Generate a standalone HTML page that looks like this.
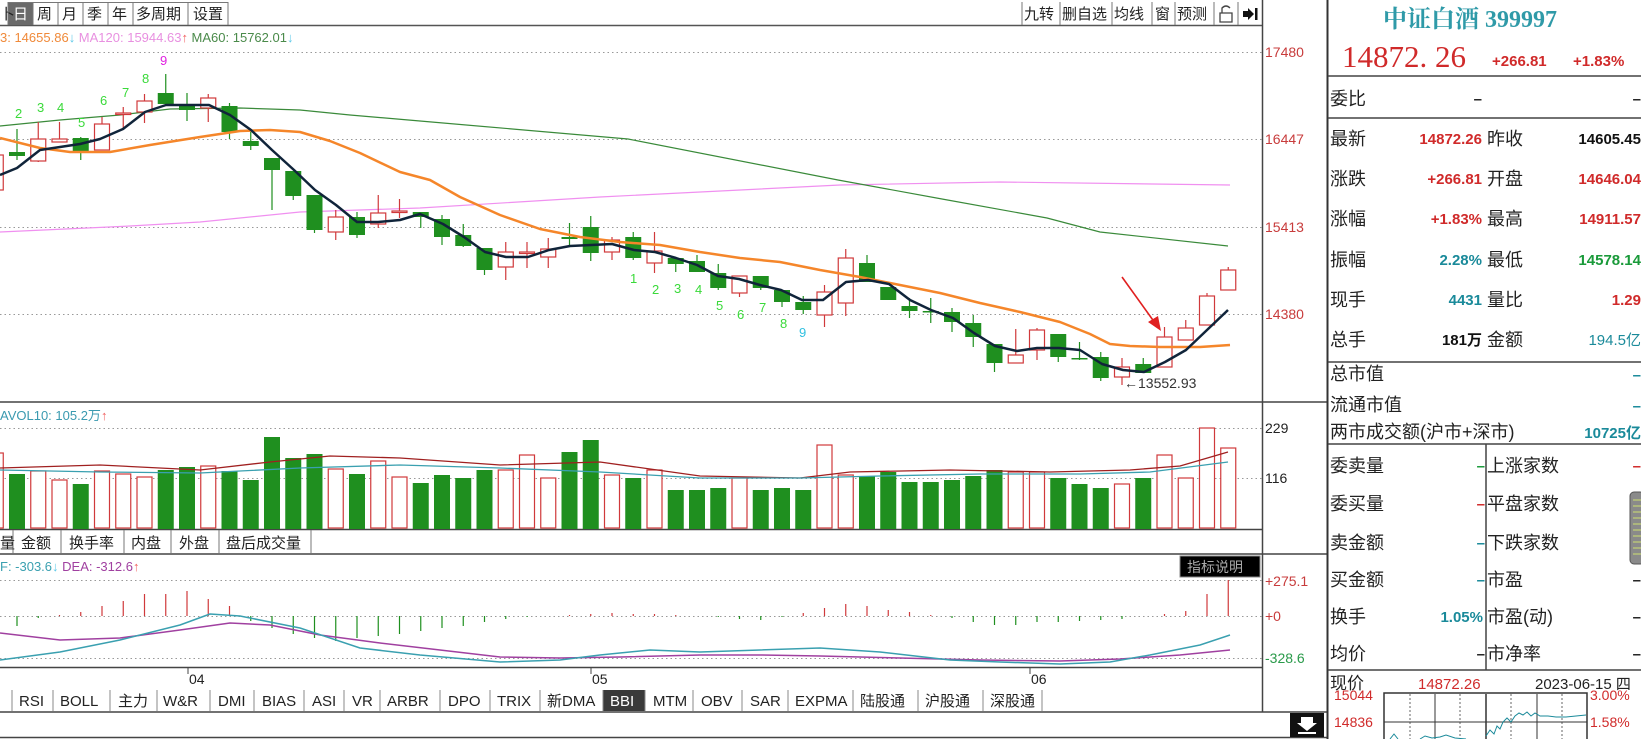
<!DOCTYPE html>
<html><head><meta charset="utf-8">
<style>
html,body{margin:0;padding:0;background:#fff;width:1641px;height:739px;overflow:hidden}
svg{display:block}
text{font-family:"Liberation Sans","Noto Sans CJK SC",sans-serif}
.cj{font-family:"Noto Sans CJK SC","WenQuanYi Zen Hei",sans-serif}
</style></head>
<body>
<svg id="s" width="1641" height="739" xmlns="http://www.w3.org/2000/svg">
<rect width="1641" height="739" fill="#fff"/>
<g font-size="15" class="cj">
<line x1="0" y1="25.5" x2="1262" y2="25.5" stroke="#555" stroke-width="1.5"/>
<rect x="8" y="2" width="25" height="23" fill="#6a6a6a"/>
<text x="0" y="19" class="cj" fill="#222">卜</text>
<text x="13" y="19" class="cj" fill="#fff">日</text>
<g fill="#222" class="cj">
<text x="37" y="19">周</text><text x="62" y="19">月</text><text x="87" y="19">季</text><text x="112" y="19">年</text>
<text x="136" y="19">多周期</text><text x="193" y="19">设置</text>
<text x="1024" y="19">九转</text><text x="1062" y="19">删自选</text><text x="1114" y="19">均线</text><text x="1155" y="19">窗</text><text x="1177" y="19">预测</text>
</g>
<g stroke="#777" fill="none">
<path d="M8 2V25M33 2V25M58 2V25M83 2V25M108 2V25M133 2V25M188 2V25M228 2V25M8 2.5H228"/>
<path d="M1022 2V25M1060 2V25M1112 2V25M1152 2V25M1175 2V25M1214 2V25M1238 2V25"/>
</g>
<path d="M1220 22V13H1232V22ZM1222 13V8Q1226 4 1230 8" stroke="#444" fill="none" stroke-width="1.3"/>
<path d="M1243 11H1248V8L1254 14L1248 20V17H1243Z" fill="#111"/><rect x="1255" y="8" width="2.5" height="12" fill="#111"/>
</g>
<text x="0" y="42" font-size="13"><tspan fill="#f08a3a">3: 14655.86</tspan><tspan fill="#5cc8e8">↓</tspan><tspan fill="#e890e0"> MA120: 15944.63</tspan><tspan fill="#f06060">↑</tspan><tspan fill="#4a8a4a"> MA60: 15762.01</tspan><tspan fill="#5cc8e8">↓</tspan></text>
<g id="grid" stroke="#999" stroke-dasharray="1.5,3" stroke-width="1">
<line x1="0" y1="52.5" x2="1262" y2="52.5"/><line x1="0" y1="139.5" x2="1262" y2="139.5"/>
<line x1="0" y1="227.5" x2="1262" y2="227.5"/><line x1="0" y1="314.5" x2="1262" y2="314.5"/>
<line x1="0" y1="428.5" x2="1262" y2="428.5"/><line x1="0" y1="478.5" x2="1262" y2="478.5"/>
<line x1="0" y1="580.5" x2="1262" y2="580.5"/><line x1="0" y1="616.5" x2="1262" y2="616.5"/><line x1="0" y1="658.5" x2="1262" y2="658.5"/>
</g>
<g font-size="14" fill="#c83c3c">
<text x="1265" y="57">17480</text><text x="1265" y="144">16447</text><text x="1265" y="232">15413</text><text x="1265" y="319">14380</text>
</g>
<text x="1265" y="433" font-size="14" fill="#222">229</text><text x="1265" y="483" font-size="14" fill="#222">116</text>
<text x="1265" y="586" font-size="14" fill="#c83c3c">+275.1</text><text x="1265" y="621" font-size="14" fill="#c83c3c">+0</text><text x="1265" y="663" font-size="14" fill="#2a9a4a">-328.6</text>
<g stroke="#444" stroke-width="1.5">
<line x1="1262.5" y1="0" x2="1262.5" y2="712"/>
<line x1="0" y1="402" x2="1327" y2="402"/>
<line x1="0" y1="529.5" x2="1262" y2="529.5"/>
<line x1="0" y1="554" x2="1327" y2="554"/>
<line x1="0" y1="667.5" x2="1262" y2="667.5"/>
<line x1="0" y1="712" x2="1327" y2="712"/>
<line x1="0" y1="737.5" x2="1327" y2="737.5"/>
</g>
<line x1="1327.5" y1="0" x2="1327.5" y2="739" stroke="#333" stroke-width="2"/>
<g id="chart"></g>
<text x="0" y="420" font-size="13"><tspan fill="#3a9ab0">AVOL10: 105.2万</tspan><tspan fill="#f06060">↑</tspan></text>
<g font-size="15" fill="#222" class="cj">
<path d="M13 530V553M61 530V553M124 530V553M171 530V553M219 530V553M311 530V553" stroke="#777"/>
<text x="0" y="548">量</text><text x="21" y="548">金额</text><text x="69" y="548">换手率</text><text x="131" y="548">内盘</text><text x="179" y="548">外盘</text><text x="226" y="548">盘后成交量</text>
</g>
<text x="0" y="571" font-size="13"><tspan fill="#3aa0b0">F: -303.6</tspan><tspan fill="#5cc8e8">↓</tspan><tspan fill="#a040a0"> DEA: -312.6</tspan><tspan fill="#f06060">↑</tspan></text>
<rect x="1180" y="556" width="80" height="21" fill="#000" stroke="#888"/>
<text x="1187" y="572" font-size="14" fill="#aaa" class="cj">指标说明</text>
<g font-size="14" fill="#222"><text x="189" y="684">04</text><text x="592" y="684">05</text><text x="1031" y="684">06</text></g>
<path d="M188 668V674M591 668V674M1030 668V674" stroke="#444"/>
<g font-size="15" fill="#222">
<rect x="603" y="690" width="42" height="21" fill="#3a3a3a"/>
<path d="M12 690V711M53 690V711M110 690V711M157 690V711M210 690V711M254 690V711M304 690V711M344 690V711M380 690V711M440 690V711M490 690V711M540 690V711M603 690V711M645 690V711M693 690V711M742 690V711M788 690V711M853 690V711M918 690V711M983 690V711M1042 690V711" stroke="#888"/>
<text x="19" y="706">RSI</text><text x="60" y="706">BOLL</text><text x="118" y="706" class="cj">主力</text><text x="163" y="706">W&amp;R</text><text x="218" y="706">DMI</text><text x="262" y="706">BIAS</text><text x="312" y="706">ASI</text><text x="352" y="706">VR</text><text x="387" y="706">ARBR</text><text x="448" y="706">DPO</text><text x="497" y="706">TRIX</text><text x="547" y="706"><tspan class="cj">新</tspan>DMA</text><text x="610" y="706" fill="#fff">BBI</text><text x="653" y="706">MTM</text><text x="701" y="706">OBV</text><text x="750" y="706">SAR</text><text x="795" y="706">EXPMA</text><text x="860" y="706" class="cj">陆股通</text><text x="925" y="706" class="cj">沪股通</text><text x="990" y="706" class="cj">深股通</text>
</g>
<rect x="1290" y="713" width="34" height="24" fill="#111"/>
<path d="M1301 717H1313V723H1317L1307 731L1297 723H1301Z" fill="#fff"/><rect x="1298" y="732" width="18" height="2" fill="#fff"/>

<text x="1383" y="27" font-size="24" font-weight="bold" fill="#2f9aa8" style="font-family:'Liberation Serif','Noto Serif CJK SC',serif">中证白酒 399997</text>
<text x="1342" y="67" font-size="31" fill="#d02a2a" style="font-family:'Liberation Serif',serif">14872. 26</text>
<text x="1492" y="66" font-size="15" font-weight="bold" fill="#d02a2a">+266.81</text>
<text x="1573" y="66" font-size="15" font-weight="bold" fill="#d02a2a">+1.83%</text>
<g stroke="#444" stroke-width="1.5"><line x1="1328" y1="76" x2="1641" y2="76"/><line x1="1328" y1="118" x2="1641" y2="118"/><line x1="1328" y1="362" x2="1641" y2="362"/><line x1="1328" y1="444" x2="1641" y2="444"/><line x1="1328" y1="670" x2="1641" y2="670"/><line x1="1486" y1="444" x2="1486" y2="670"/></g>
<g font-size="18" fill="#222" class="cj">
<text x="1330" y="105">委比</text>
<text x="1330" y="145">最新</text><text x="1487" y="145">昨收</text>
<text x="1330" y="185">涨跌</text><text x="1487" y="185">开盘</text>
<text x="1330" y="225">涨幅</text><text x="1487" y="225">最高</text>
<text x="1330" y="266">振幅</text><text x="1487" y="266">最低</text>
<text x="1330" y="306">现手</text><text x="1487" y="306">量比</text>
<text x="1330" y="346">总手</text><text x="1487" y="346">金额</text>
<text x="1330" y="380">总市值</text><text x="1330" y="411">流通市值</text><text x="1330" y="438">两市成交额(沪市+深市)</text>
<text x="1330" y="472">委卖量</text><text x="1487" y="472">上涨家数</text>
<text x="1330" y="510">委买量</text><text x="1487" y="510">平盘家数</text>
<text x="1330" y="549">卖金额</text><text x="1487" y="549">下跌家数</text>
<text x="1330" y="586">买金额</text><text x="1487" y="586">市盈</text>
<text x="1330" y="623">换手</text><text x="1487" y="623">市盈(动)</text>
<text x="1330" y="660">均价</text><text x="1487" y="660">市净率</text>
</g>
<g font-size="15" font-weight="bold" text-anchor="end">
<text x="1482" y="104" fill="#222">–</text><text x="1641" y="104" fill="#222">–</text>
<text x="1482" y="144" fill="#d02a2a">14872.26</text><text x="1641" y="144" fill="#111">14605.45</text>
<text x="1482" y="184" fill="#d02a2a">+266.81</text><text x="1641" y="184" fill="#d02a2a">14646.04</text>
<text x="1482" y="224" fill="#d02a2a">+1.83%</text><text x="1641" y="224" fill="#d02a2a">14911.57</text>
<text x="1482" y="265" fill="#1a8a9a">2.28%</text><text x="1641" y="265" fill="#1a9a3a">14578.14</text>
<text x="1482" y="305" fill="#1a8a9a">4431</text><text x="1641" y="305" fill="#d02a2a">1.29</text>
<text x="1482" y="345" fill="#111">181万</text><text x="1641" y="345" fill="#1a8a9a" font-weight="normal">194.5亿</text>
<text x="1641" y="380" fill="#1a8a9a">–</text><text x="1641" y="411" fill="#1a8a9a">–</text>
<text x="1641" y="438" fill="#1a8a9a">10725亿</text>
<text x="1485" y="471" fill="#1a9a3a">–</text><text x="1641" y="471" fill="#d02a2a">–</text>
<text x="1485" y="509" fill="#d02a2a">–</text>
<text x="1485" y="548" fill="#1a8a9a">–</text>
<text x="1485" y="585" fill="#1a8a9a">–</text><text x="1641" y="585" fill="#222">–</text>
<text x="1483" y="622" fill="#1a8a9a">1.05%</text><text x="1641" y="622" fill="#222">–</text>
<text x="1485" y="659" fill="#222">–</text><text x="1641" y="659" fill="#222">–</text>
</g>
<rect x="1630" y="492" width="14" height="72" rx="4" fill="#8a8a8a" stroke="#555"/>
<path d="M1633 500H1641M1633 506H1641M1633 512H1641M1633 518H1641M1633 524H1641M1633 530H1641M1633 536H1641M1633 542H1641M1633 548H1641M1633 554H1641" stroke="#cde070" stroke-width="1"/>
<text x="1330" y="689" font-size="17" fill="#222" class="cj">现价</text>
<text x="1418" y="689" font-size="15" fill="#d02a2a">14872.26</text>
<text x="1535" y="689" font-size="15" fill="#222">2023-06-15 <tspan class="cj">四</tspan></text>
<rect x="1384" y="693" width="203" height="50" fill="#fff" stroke="#333" stroke-width="1.5"/>
<path d="M1435 694V739M1537 694V739" stroke="#333"/><path d="M1486 694V739" stroke="#333" stroke-width="1.5"/>
<path d="M1410 694V739M1460 694V739M1511 694V739M1562 694V739" stroke="#666" stroke-dasharray="2,2"/>
<line x1="1384" y1="722" x2="1587" y2="722" stroke="#333"/>
<text x="1334" y="700" font-size="14" fill="#d02a2a">15044</text><text x="1334" y="727" font-size="14" fill="#d02a2a">14836</text>
<text x="1590" y="700" font-size="14" fill="#d02a2a">3.00%</text><text x="1590" y="727" font-size="14" fill="#d02a2a">1.58%</text>
<path d="M1390 739L1394 734L1398 739M1420 739L1425 736L1432 738L1440 737L1446 735L1455 738L1466 739M1486 736L1490 730L1494 734L1497 726L1500 729L1503 722L1507 718L1511 722L1515 716L1519 713L1523 715L1527 712L1531 716L1535 713L1540 716L1548 716L1556 717L1566 717L1576 716L1586 715" stroke="#1a8a9a" fill="none"/>
</svg>
<script>
var C=[
['r',155,190,150,190],['g',152,156,129,160],['r',139,161,122,162],['r',139,142,122,142],['g',138,151,137,160],['r',124,150,117,150],['r',113,114,107,130],['r',101,112,94,123],['g',93,104,74,104],['g',106,110,93,121],['r',98,108,94,122],['g',106,132,103,139],['g',141,146,132,150],['g',158,170,158,210],['g',171,196,171,200],['g',195,230,195,233],['r',217,232,210,240],['g',217,235,212,238],['r',213,224,195,228],['r',211,212,199,218],
['g',212,217,212,228],['g',219,237,215,245],['g',235,246,224,247],['g',248,270,248,275],['r',252,267,242,280],['r',252,253,242,268],['r',249,257,238,268],['g',237,239,223,247],['g',227,253,216,261],['r',240,252,237,260],['g',237,258,232,260],['r',251,263,232,273],['g',258,264,258,272],['g',261,272,255,272],['g',273,288,264,290],['r',276,293,276,297],['g',276,288,276,290],['g',290,302,290,307],['g',302,310,296,314],['r',292,315,285,327],
['r',258,303,249,316],['g',263,282,255,282],['g',287,300,287,300],['g',306,311,298,318],['g',311,312,298,323],['g',312,322,308,332],['g',323,337,315,347],['g',344,363,344,372],['r',355,363,329,363],['r',330,350,328,360],['g',334,357,334,362],['g',358,359,342,360],['g',357,378,352,381],['r',367,377,358,385],['g',364,373,358,373],['r',337,367,327,367],['r',328,340,320,340],['r',296,325,293,325],['r',270,290,267,290]];
var V=[453,474,471,480,484,471,474,477,470,467,466,471,480,437,458,454,469,474,461,477,483,475,478,470,470,455,478,452,440,475,478,470,490,490,488,478,490,488,490,445,475,476,472,482,482,480,476,470,472,472,478,484,488,484,478,455,478,428,448];
V=V.slice(0,C.length-2).concat([428,448]);
var H=[-12,-10,-2,1,4,10,15,22,22,25,17,10,-5,-12,-18,-22,-25,-22,-20,-18,-15,-12,-10,-6,-3,-1,0,1,2,3,2,2,1,0,-1,-3,-4,-1,3,8,12,10,6,4,1,-2,-6,-9,-9,-6,-6,-5,-4,-3,0,2,5,22,36];
var R='#d0393b',G='#1f8f1f',o='';
function X(i){return 17+21.25*(i-1);}
function pl(p,c,w){return '<polyline fill="none" stroke="'+c+'" stroke-width="'+w+'" stroke-linejoin="round" points="'+p.map(function(a){return a.join(',')}).join(' ')+'"/>';}
o+=pl([[0,232],[130,226],[200,222],[300,212],[420,208],[600,197],[840,185],[1000,182],[1230,185]],'#f090f0',1.2);
o+=pl([[0,126],[60,120],[120,115],[170,109],[240,108],[300,110],[350,115],[420,121],[628,139],[838,180],[942,199],[1047,218],[1100,232],[1228,246]],'#3a8a3a',1.2);
for(var i=0;i<C.length;i++){var c=C[i],x=X(i),col=c[0]=='r'?R:G;
 o+='<line x1="'+x+'" y1="'+c[3]+'" x2="'+x+'" y2="'+c[4]+'" stroke="'+col+'" stroke-width="1.2"/>';
 var h=Math.max(c[2]-c[1],1.5);
 if(c[0]=='r') o+='<rect x="'+(x-7.5)+'" y="'+c[1]+'" width="15" height="'+h+'" fill="#fff" stroke="'+R+'" stroke-width="1.2"/>';
 else o+='<rect x="'+(x-8)+'" y="'+c[1]+'" width="16" height="'+h+'" fill="'+G+'"/>';
 var v=V[i]||480;
 if(c[0]=='r') o+='<rect x="'+(x-7.5)+'" y="'+v+'" width="15" height="'+(528-v)+'" fill="#fff" stroke="'+R+'" stroke-width="1.2"/>';
 else o+='<rect x="'+(x-8)+'" y="'+v+'" width="16" height="'+(529-v)+'" fill="'+G+'"/>';
 var hh=H[i]||0; if(hh) o+='<line x1="'+x+'" y1="616" x2="'+x+'" y2="'+(616-hh)+'" stroke="'+(hh>0?R:G)+'" stroke-width="1.2"/>';
}
o+=pl([[0,138],[40,148],[70,152],[110,152],[150,145],[200,137],[240,131],[270,130],[300,132],[330,141],[360,153],[400,172],[430,180],[460,197],[500,215],[540,229],[580,237],[620,242],[660,245],[700,252],[740,258],[780,262],[820,270],[860,277],[900,285],[940,293],[980,303],[1020,312],[1060,322],[1090,334],[1110,344],[1130,346],[1160,347],[1200,347],[1230,345]],'#f5862a',2.5);
o+=pl([[0,175],[17,168],[40,150],[60,147],[80,144],[100,139],[123,129],[145,112],[166,105],[188,105],[209,105],[230,115],[251,130],[272,150],[294,170],[315,190],[336,205],[357,222],[378,222],[400,220],[420,214],[443,224],[464,237],[485,252],[506,257],[528,257],[549,250],[570,246],[591,245],[612,244],[634,250],[655,252],[676,258],[697,265],[718,276],[739,279],[760,285],[781,290],[802,300],[823,300],[846,282],[868,280],[889,284],[910,300],[931,310],[953,318],[974,333],[995,346],[1017,351],[1037,348],[1059,348],[1080,350],[1102,364],[1123,370],[1144,372],[1165,362],[1186,350],[1207,330],[1228,310]],'#10243a',2.5);
o+=pl([[0,468],[100,465],[200,470],[270,462],[330,456],[400,458],[500,465],[600,462],[700,476],[800,478],[850,472],[950,470],[1050,472],[1130,470],[1180,466],[1228,452]],'#a02020',1.3);
o+=pl([[0,470],[100,472],[200,473],[300,468],[400,465],[500,468],[600,472],[700,478],[800,478],[880,476],[980,474],[1080,474],[1150,472],[1228,462]],'#3aa0b0',1.3);
o+=pl([[0,633],[60,640],[120,638],[180,630],[230,623],[270,625],[320,635],[380,643],[440,650],[500,657],[560,658],[620,657],[700,655],[760,655],[820,656],[900,658],[980,660],[1060,661],[1120,659],[1180,655],[1230,650]],'#a040a0',1.5);
o+=pl([[0,660],[60,652],[120,640],[180,625],[210,614],[240,616],[300,628],[360,648],[420,655],[500,662],[560,660],[600,655],[650,650],[700,652],[760,650],[820,648],[880,652],[950,660],[1000,662],[1060,664],[1110,662],[1150,655],[1200,645],[1230,635]],'#3aa0b0',1.5);
var T=[[15,118,'2'],[37,112,'3'],[57,112,'4'],[78,127,'5'],[100,105,'6'],[122,97,'7'],[142,83,'8'],[630,283,'1'],[652,294,'2'],[674,293,'3'],[695,294,'4'],[716,310,'5'],[737,319,'6'],[759,312,'7'],[780,328,'8']];
T.forEach(function(t){o+='<text x="'+t[0]+'" y="'+t[1]+'" font-size="13" fill="#3ada3a">'+t[2]+'</text>';});
o+='<text x="160" y="65" font-size="13" fill="#e020e0">9</text><text x="799" y="337" font-size="13" fill="#30c0e0">9</text>';
o+='<line x1="1122" y1="277" x2="1155" y2="323" stroke="#e02020" stroke-width="1.6"/><path d="M1161 331L1148 322L1158 316Z" fill="#e02020"/>';
o+='<text x="1124" y="388" font-size="14" fill="#333">←13552.93</text>';
document.getElementById('chart').innerHTML=o;
</script>
</body></html>
